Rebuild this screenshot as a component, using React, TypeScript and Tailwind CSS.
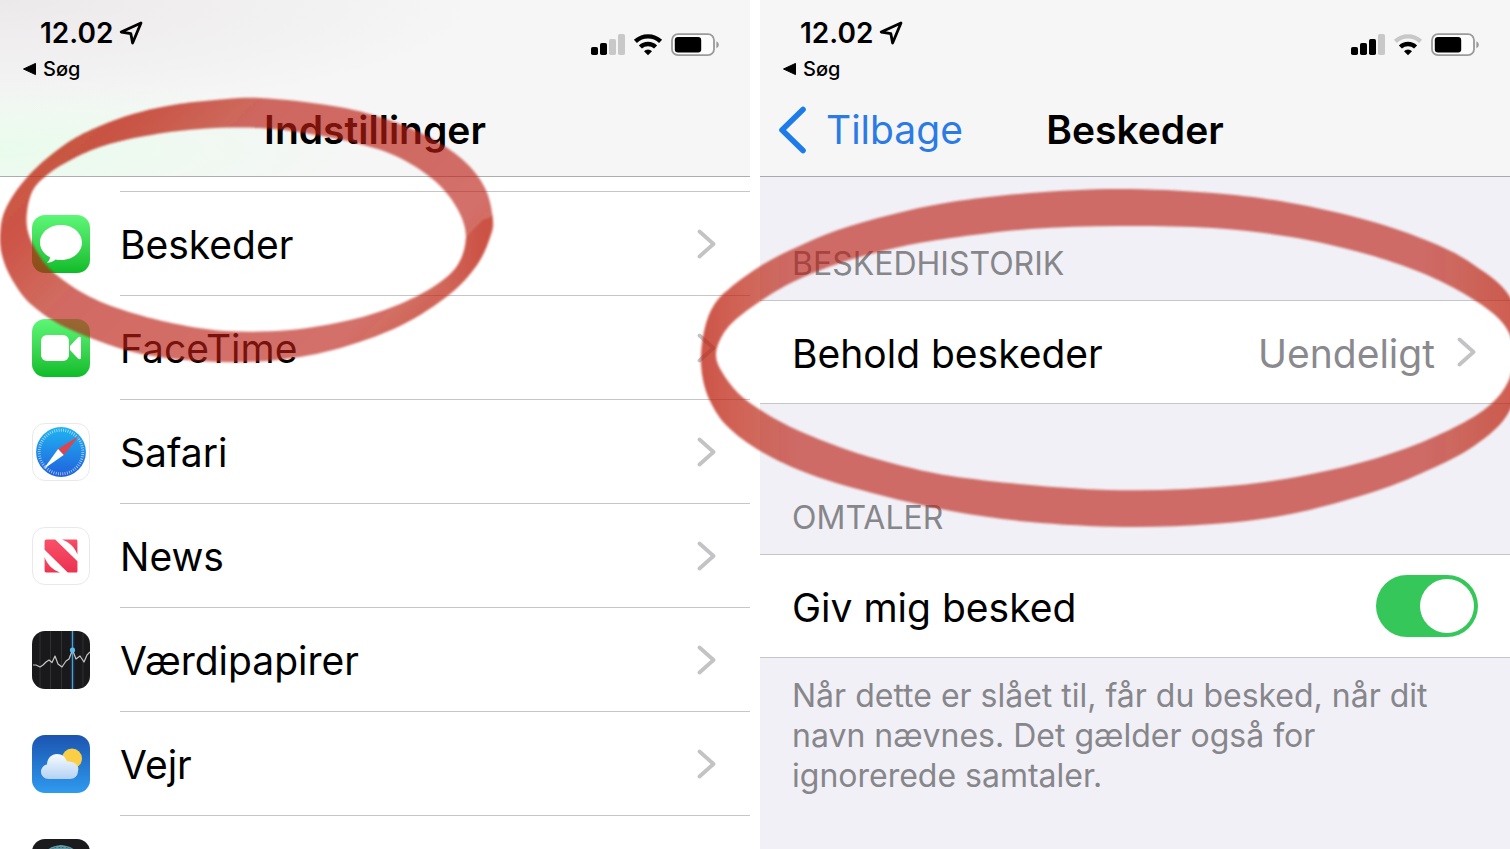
import type { ReactNode } from 'react';

type Point = [number, number];

// Closed Catmull-Rom curve through the points
const smooth = (pts: Point[]) => {
	const n = pts.length;
	let d = `M${pts[0][0]} ${pts[0][1]}`;
	for (let i = 0; i < n; i++) {
		const [a, b, c, e] = [pts[(i + n - 1) % n], pts[i], pts[(i + 1) % n], pts[(i + 2) % n]];
		d += `C${b[0] + (c[0] - a[0]) / 6} ${b[1] + (c[1] - a[1]) / 6} ${c[0] - (e[0] - b[0]) / 6} ${c[1] - (e[1] - b[1]) / 6} ${c[0]} ${c[1]}`;
	}
	return d + 'Z';
};

const leftOuter: Point[] = [
	[260, 98], [333, 106], [383, 118], [427, 136], [463, 160], [485, 188], [493, 220],
	[490, 238], [477, 265], [450, 294], [400, 326], [333, 350], [267, 361], [200, 361],
	[133, 352], [67, 328], [33, 306], [16, 286], [4, 262], [0, 237], [6, 208],
	[30, 174], [67, 143], [100, 126], [133, 114], [167, 106], [205, 101],
];
const leftInner: Point[] = [
	[260, 128], [310, 134], [360, 144], [400, 158], [436, 182], [458, 210], [466, 238],
	[457, 266], [433, 287], [395, 306], [350, 320], [290, 330], [225, 331], [167, 322],
	[117, 308], [83, 293], [53, 272], [37, 252], [28, 232], [27, 212], [33, 190],
	[47, 175], [67, 162], [100, 147], [145, 136], [200, 129],
];
// Darker overlap where the marker stroke starts and ends
const leftSeam = 'M493 215 Q490 219 484 219 Q476 226 469 234 Q465 238 465 243 Q464 255 457 266 Q447 278 433 287 L450 294 Q466 281 477 265 Q492 240 493 215 Z';

const rightOuter: Point[] = [
	[1119, 189], [1213, 193], [1291, 203], [1370, 221], [1433, 243], [1474, 265], [1510, 297],
	[1524, 350], [1510, 410], [1474, 446], [1422, 473], [1370, 493], [1291, 514], [1213, 524],
	[1124, 527], [1030, 522], [951, 511], [880, 495], [812, 475], [762, 452], [728, 427],
	[711, 403], [703, 380], [701, 355], [705, 327], [714, 305], [730, 288], [762, 265],
	[795, 248], [838, 230], [890, 215], [951, 202], [1030, 193],
];
const rightInner: Point[] = [
	[1119, 226], [1213, 228], [1291, 237], [1359, 252], [1412, 269], [1454, 288], [1490, 311],
	[1508, 331], [1514, 355], [1508, 382], [1490, 405], [1459, 425], [1407, 448], [1344, 467],
	[1265, 482], [1187, 489], [1108, 490], [1030, 485], [951, 476], [895, 464], [845, 449],
	[795, 429], [762, 411], [738, 393], [722, 372], [716, 356], [720, 340], [733, 322],
	[762, 300], [795, 281], [840, 263], [895, 248], [951, 238], [1030, 229],
];

export default function App() {
	return (
		<div
			className={`grid h-screen grid-cols-2 gap-[10px] overflow-hidden bg-white font-["Inter","Liberation_Sans",sans-serif] text-black`}
		>
			<SettingsScreen />
			<MessagesScreen />
		</div>
	);
}

const SettingsScreen = () => {
	return (
		<main className="relative">
			<header className="border-b border-[#adadad] bg-[#f6f6f6] bg-[radial-gradient(ellipse_at_0%_0%,#ece9eb_0,#f6f6f600_45%),radial-gradient(ellipse_at_0%_85%,#e9fcec_0,#f6f6f600_35%)]">
				<StatusBar bars={2} wifi={3} />
				<NavBar title="Indstillinger" />
			</header>
			<ul>
				<li className="ml-[120px] h-[15px] border-b border-[#c6c6c8]" />
				<SettingsRow icon={<MessagesIcon />} label="Beskeder" />
				<SettingsRow icon={<FaceTimeIcon />} label="FaceTime" />
				<SettingsRow icon={<SafariIcon />} label="Safari" />
				<SettingsRow icon={<NewsIcon />} label="News" />
				<SettingsRow icon={<StocksIcon />} label="Værdipapirer" />
				<SettingsRow icon={<WeatherIcon />} label="Vejr" />
				<SettingsRow icon={<TranslateIcon />} />
			</ul>
			<svg
				className="pointer-events-none absolute top-0 left-0 h-[849px] w-[750px] overflow-visible"
				viewBox="0 0 750 849"
				aria-hidden="true"
			>
				<defs>
					<filter id="soft-left"><feGaussianBlur stdDeviation="0.8" /></filter>
					<linearGradient id="marker-left" gradientUnits="userSpaceOnUse" x1="100" y1="100" x2="400" y2="400">
						<stop offset="0" stopColor="#bd2412" stopOpacity="0.78" />
						<stop offset="0.1" stopColor="#bd2412" stopOpacity="0.76" />
						<stop offset="0.28" stopColor="#ba2014" stopOpacity="0.66" />
						<stop offset="0.8" stopColor="#ba2014" stopOpacity="0.63" />
						<stop offset="0.92" stopColor="#bd2412" stopOpacity="0.72" />
						<stop offset="1" stopColor="#bd2412" stopOpacity="0.74" />
					</linearGradient>
					<linearGradient id="seam-left" gradientUnits="userSpaceOnUse" x1="480" y1="220" x2="442" y2="290">
						<stop offset="0" stopColor="#bd2412" stopOpacity="0.34" />
						<stop offset="0.5" stopColor="#bd2412" stopOpacity="0.2" />
						<stop offset="1" stopColor="#bd2412" stopOpacity="0" />
					</linearGradient>
				</defs>
				<g filter="url(#soft-left)">
					<path d={smooth(leftOuter) + smooth(leftInner)} fill="url(#marker-left)" fillRule="evenodd" />
					<path d={leftSeam} fill="url(#seam-left)" />
				</g>
			</svg>
		</main>
	);
};

const MessagesScreen = () => {
	return (
		<section className="relative bg-[#f1f0f6]">
			<header className="border-b border-[#a9aab0] bg-[#f6f6f7]">
				<StatusBar bars={3} wifi={2} />
				<NavBar title="Beskeder" back="Tilbage" />
			</header>
			<GroupTitle className="h-[123px]">BESKEDHISTORIK</GroupTitle>
			<a href="#behold" className="flex h-[104px] items-center border-y border-[#c6c6c8] bg-white pr-[34px] pl-8 text-[39px]">
				<span className="flex-1 pt-1">Behold beskeder</span>
				<span className="mr-[22px] pt-1 text-[#8a8a8e]">Uendeligt</span>
				<Chevron />
			</a>
			<GroupTitle className="h-[150px]">OMTALER</GroupTitle>
			<label className="flex h-[104px] items-center justify-between border-y border-[#c6c6c8] bg-white px-8 text-[39px]">
				<span className="pt-1">Giv mig besked</span>
				<input
					type="checkbox"
					defaultChecked
					className="h-[62px] w-[102px] appearance-none rounded-full bg-[#e9e9eb] p-1 before:block before:size-[54px] before:rounded-full before:bg-white checked:bg-[#35c759] checked:before:ml-10"
				/>
			</label>
			<p className="max-w-[720px] pt-[18px] pl-8 text-[32px] leading-10 text-[#86868b]">
				Når dette er slået til, får du besked, når dit
				<br />
				navn nævnes. Det gælder også for
				<br />
				ignorerede samtaler.
			</p>
			<svg
				className="pointer-events-none absolute top-0 left-0 h-[849px] w-[750px] overflow-visible"
				viewBox="760 0 750 849"
				aria-hidden="true"
			>
				<defs>
					<filter id="soft-right"><feGaussianBlur stdDeviation="0.8" /></filter>
					<linearGradient id="marker-right" gradientUnits="userSpaceOnUse" x1="700" y1="0" x2="1520" y2="0">
						<stop offset="0" stopColor="#bd2412" stopOpacity="0.77" />
						<stop offset="0.03" stopColor="#bd2412" stopOpacity="0.73" />
						<stop offset="0.12" stopColor="#ba2014" stopOpacity="0.63" />
						<stop offset="0.88" stopColor="#ba2014" stopOpacity="0.63" />
						<stop offset="1" stopColor="#bd2412" stopOpacity="0.74" />
					</linearGradient>
				</defs>
				<path d={smooth(rightOuter) + smooth(rightInner)} fill="url(#marker-right)" fillRule="evenodd" filter="url(#soft-right)" />
			</svg>
		</section>
	);
};

const StatusBar = ({ bars, wifi }: { bars: number; wifi: number }) => {
	const tone = (on: boolean) => (on ? '#000' : '#c8c8c8');
	return (
		<div className="flex h-[88px] items-start justify-between pr-[30px] pl-[22px]">
			<div className="flex flex-col pt-[15px]">
				<div className="flex h-9 items-center gap-[6px] pl-[18px] text-[28px] font-semibold">
					12.02
					<svg className="size-[24px]" viewBox="0 0 24 24" aria-hidden="true">
						<path d="M22 2 L2.2 11 L11.8 12.6 L13.6 22 Z" fill="none" stroke="#000" strokeWidth="2.8" strokeLinejoin="round" />
					</svg>
				</div>
				<a href="#sog" className="flex h-9 items-center gap-[6px] text-[20px] font-medium">
					<svg className="h-[14px] w-[15px]" viewBox="0 0 15 14" aria-hidden="true">
						<path d="M1.5 7 L13.5 1.4 V12.6 Z" stroke="#000" strokeLinejoin="round" />
					</svg>
					Søg
				</a>
			</div>
			<svg className="mt-[33px] h-6 w-[130px]" viewBox="0 0 130 24" aria-hidden="true">
				<rect x="1" y="14" width="7" height="8" rx="1.8" fill={tone(bars > 0)} />
				<rect x="10" y="10" width="7" height="12" rx="1.8" fill={tone(bars > 1)} />
				<rect x="19" y="6" width="7" height="16" rx="1.8" fill={tone(bars > 2)} />
				<rect x="28" y="1" width="7" height="21" rx="1.8" fill={tone(bars > 3)} />
				<g fill="none" strokeWidth="4.4">
					<path d="M45.4 8.4 A18.2 18.2 0 0 1 70.6 8.4" stroke={tone(wifi > 2)} />
					<path d="M50.4 14 A11 11 0 0 1 65.6 14" stroke={tone(wifi > 1)} />
				</g>
				<path d="M58 22.2 L54 18.2 A5.8 5.8 0 0 1 62 18.2 Z" />
				<rect x="82" y="1.2" width="42" height="21" rx="6" fill="#fcfcfc" stroke="#9a9a9a" strokeWidth="1.8" />
				<rect x="84.8" y="4" width="26.4" height="15.4" rx="3.2" />
				<path d="M126.4 8.2 C129.6 9.6 129.6 13.8 126.4 15.2 Z" fill="#9a9a9a" />
			</svg>
		</div>
	);
};

const NavBar = ({ title, back }: { title: string; back?: string }) => {
	return (
		<div className="grid h-[88px] grid-cols-[1fr_auto_1fr] items-center pb-1">
			{back ? (
				<a href="#tilbage" className="flex items-center gap-[18px] pl-[18px] text-[39px] text-[#2c7be5]">
					<svg className="h-12 w-[30px]" viewBox="0 0 30 48" aria-hidden="true">
						<path d="M25 3.5 L4 24 L25 44.5" fill="none" stroke="#1d7bea" strokeWidth="5.6" strokeLinecap="round" strokeLinejoin="round" />
					</svg>
					{back}
				</a>
			) : (
				<span />
			)}
			<h1 className="text-[39px] font-semibold">{title}</h1>
		</div>
	);
};

const GroupTitle = ({ className, children }: { className: string; children: ReactNode }) => {
	return (
		<h2 className={`flex items-end pb-3 pl-8 text-[32px] text-[#86868b] ${className}`}>
			{children}
		</h2>
	);
};

const SettingsRow = ({ icon, label }: { icon: ReactNode; label?: string }) => {
	return (
		<li>
			<a href="#app" className="flex h-[104px] items-center gap-[30px] pl-8 text-[39px]">
				{icon}
				<span className="flex h-full flex-1 items-center justify-between border-b border-[#c6c6c8] pr-[34px]">
					<span className="pt-1">{label}</span>
					<Chevron />
				</span>
			</a>
		</li>
	);
};

const Chevron = () => {
	return (
		<svg className="h-[30px] w-[19px]" viewBox="0 0 19 30" aria-hidden="true">
			<path d="M2.5 2.5 L16.5 15 L2.5 27.5" fill="none" stroke="#c3c3c6" strokeWidth="3.8" strokeLinecap="round" strokeLinejoin="round" />
		</svg>
	);
};

const AppIcon = ({ className, children }: { className: string; children: ReactNode }) => {
	return (
		<svg className={`size-[58px] rounded-[13px] ${className}`} viewBox="0 0 58 58" aria-hidden="true">
			{children}
		</svg>
	);
};

const MessagesIcon = () => {
	return (
		<AppIcon className="bg-linear-to-b from-[#5df777] to-[#0abc28]">
			<path
				d="M29 10 C17.3 10 8 17.8 8 27.6 C8 34 12 39.3 18 42.3 C18 44.3 16.8 46.2 14.8 47.6 C18.6 47.6 21.6 46.2 23.6 44.4 C25.3 44.8 27.1 45 29 45 C40.7 45 50 37.3 50 27.6 C50 17.8 40.7 10 29 10 Z"
				fill="#fff"
			/>
		</AppIcon>
	);
};

const FaceTimeIcon = () => {
	return (
		<AppIcon className="bg-linear-to-b from-[#5df777] to-[#0abc28]">
			<rect x="9" y="16" width="28" height="26" rx="6" fill="#fff" />
			<path d="M38 27 L46 18.6 Q49 16.5 49 20 V38 Q49 41.5 46 39.4 L38 31 Z" fill="#fff" />
		</AppIcon>
	);
};

const SafariIcon = () => {
	return (
		<AppIcon className="border border-[#e9e9e9] bg-white">
			<defs>
				<linearGradient id="safari" x1="0" y1="0" x2="0" y2="1">
					<stop offset="0" stopColor="#1fb4f2" />
					<stop offset="1" stopColor="#2160dc" />
				</linearGradient>
			</defs>
			<circle cx="29" cy="29" r="25.8" fill="url(#safari)" />
			<circle cx="29" cy="29" r="22.6" fill="none" stroke="#e5f3ff" strokeWidth="3" strokeDasharray="0.8 1.55" opacity="0.75" />
			<path d="M47.5 12.5 L26 26 L31.8 32 Z" fill="#e0444a" />
			<path d="M11 46.5 L26 26 L31.8 32 Z" fill="#fff" />
		</AppIcon>
	);
};

const NewsIcon = () => {
	return (
		<AppIcon className="border border-[#e9e9e9] bg-white">
			<defs>
				<linearGradient id="news" x1="0" y1="0" x2="0" y2="1">
					<stop offset="0" stopColor="#f9506a" />
					<stop offset="1" stopColor="#ea3350" />
				</linearGradient>
			</defs>
			<g fill="url(#news)">
				<path d="M14 12 H23 L46 34.5 V45 Q46 46 45 46 H36 L12 22.5 V14 Q12 12 14 12 Z" />
				<path d="M30 12 H44.5 Q46 12 46 13.5 V27.5 C43.5 20.5 38 14.8 30 12 Z" />
				<path d="M12 30 C14.6 37.5 20 43.2 28 46 H13.5 Q12 46 12 44.5 Z" />
			</g>
		</AppIcon>
	);
};

const StocksIcon = () => {
	return (
		<AppIcon className="bg-[#19191b]">
			<path d="M8 0 V58 M18.5 0 V58 M29.5 0 V58 M51 0 V58" stroke="#303032" />
			<path d="M40.5 0 V58" stroke="#15304a" strokeWidth="4" />
			<path d="M40.5 0 V58" stroke="#5a9cc0" strokeWidth="1.2" />
			<path
				d="M1 34 L4 34 L8 36 L11 34 L14 31 L17 29 L20 31.5 L23 25 L26 33 L30 36 L34 30 L37 28 L40.5 19 L44 28 L48 25 L52 31 L55 24 L58 21"
				fill="none"
				stroke="#c6c6c6"
				strokeWidth="1.2"
				strokeLinejoin="round"
			/>
			<circle cx="40.5" cy="19" r="2.6" fill="#5bbcf0" />
		</AppIcon>
	);
};

const WeatherIcon = () => {
	return (
		<AppIcon className="bg-linear-to-b from-[#1c54b0] to-[#2f9bef]">
			<defs>
				<linearGradient id="cloud" x1="0" y1="0" x2="0" y2="1">
					<stop offset="0" stopColor="#f7fbff" />
					<stop offset="1" stopColor="#b4d2f4" />
				</linearGradient>
			</defs>
			<circle cx="40" cy="23.5" r="10" fill="#fbcf45" />
			<path d="M27 33 C28 27 34 24.5 38.5 27 C44 26.5 47.5 31 46 36 L40 40 Z" fill="#f3df98" />
			<path
				d="M17 44 C12 44 9 40.8 9 36.8 C9 32.8 11.8 30 15 29.4 C15.2 23.4 19.4 19 25 19 C30 19 33.6 22 35 26.6 C41 26.4 46 29.5 46 35.8 C46 41 42.4 44 38 44 Z"
				fill="url(#cloud)"
			/>
		</AppIcon>
	);
};

const TranslateIcon = () => {
	return (
		<AppIcon className="bg-[#1b1b1d]">
			<g fill="none" stroke="#5f9aa6" strokeWidth="1.4">
				<circle cx="29" cy="29" r="22" />
				<ellipse cx="29" cy="29" rx="10" ry="22" />
				<path d="M29 7 V51 M17 11 Q29 7 41 11" />
			</g>
		</AppIcon>
	);
};
